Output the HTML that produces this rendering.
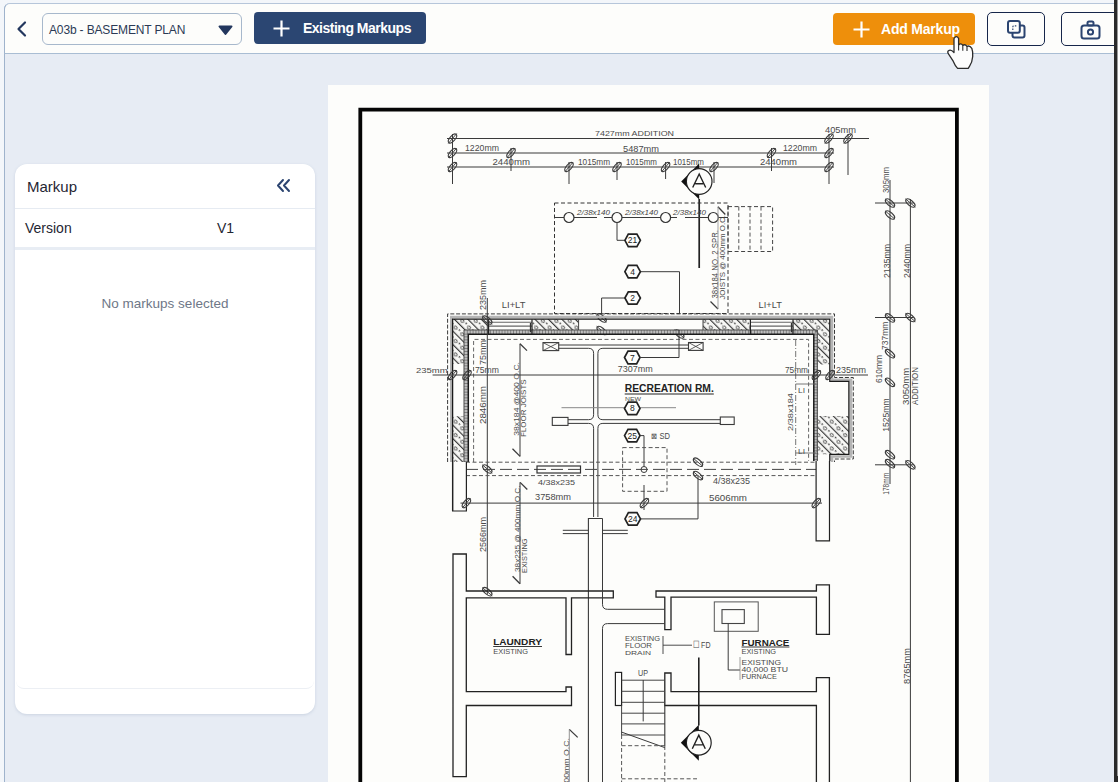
<!DOCTYPE html>
<html><head><meta charset="utf-8">
<style>
*{box-sizing:border-box;margin:0;padding:0}
html,body{width:1118px;height:782px;overflow:hidden;background:#f3f6fa;font-family:"Liberation Sans",sans-serif}
#app{position:absolute;left:4px;top:3px;width:1110px;height:779px;background:#e7ecf4;border-left:1px solid #9fb3cc;border-top:1px solid #b6c6da;border-top-left-radius:6px;overflow:hidden}
#hdr{position:absolute;left:0;top:0;width:1110px;height:51px;background:#fdfdfb;border-bottom:1px solid #a9bdd3}
#rbar{position:absolute;left:1114px;top:0;width:4px;height:782px;background:#2a2a2a}
.abs{position:absolute}
#sel{left:42px;top:13px;width:200px;height:32px;border:1px solid #a7b8cc;border-radius:6px;background:#fdfdfb}
#sel span{position:absolute;left:6px;top:9px;font-size:12px;color:#2b3a55;white-space:nowrap;letter-spacing:-0.15px}
#btnEx{left:254px;top:12px;width:172px;height:32px;background:#2b4672;border-radius:4px}
#btnAdd{left:833px;top:13px;width:142px;height:32px;background:#ee8f0b;border-radius:4px}
.btxt{position:absolute;font-weight:bold;font-size:14px;color:#fff;white-space:nowrap;letter-spacing:-0.2px}
.obtn{position:absolute;top:12px;height:34px;border:1.3px solid #16264a;border-radius:5px;background:#fdfdfb}
#panel{left:15px;top:164px;width:300px;height:550px;background:#fff;border-radius:12px;box-shadow:0 1px 3px rgba(120,140,170,.25)}
#paper{left:328px;top:85px;width:661px;height:697px;background:#fdfdfb}
</style></head>
<body>
<div id="app"></div>
<div id="hdr" class="abs" style="left:4px;top:3px;width:1110px;height:51px;border-left:1px solid #9fb3cc;border-top:1px solid #b6c6da;border-top-left-radius:6px"></div>
<!-- back chevron -->
<svg class="abs" style="left:0;top:0" width="60" height="60"><path d="M25 22.5 L18.5 29 L25 35.5" fill="none" stroke="#23375e" stroke-width="2.2" stroke-linecap="round" stroke-linejoin="round"/></svg>
<div id="sel" class="abs"><span>A03b - BASEMENT PLAN</span>
<svg class="abs" style="left:175px;top:11px" width="16" height="12"><path d="M1.5 1.5 L13.5 1.5 L7.5 9 Z" fill="#23375e" stroke="#23375e" stroke-width="2" stroke-linejoin="round"/></svg></div>
<div id="btnEx" class="abs">
<svg class="abs" style="left:19px;top:8px" width="17" height="17"><path d="M8.5 0.5V16.5M0.5 8.5H16.5" stroke="#fff" stroke-width="2.2"/></svg>
<span class="btxt" style="left:49px;top:8px;letter-spacing:-0.5px">Existing Markups</span></div>
<div id="btnAdd" class="abs">
<svg class="abs" style="left:20px;top:8px" width="17" height="17"><path d="M8.5 0.5V16.5M0.5 8.5H16.5" stroke="#fff" stroke-width="2.2"/></svg>
<span class="btxt" style="left:48px;top:8px">Add Markup</span></div>
<div class="obtn" style="left:987px;width:58px">
<svg class="abs" style="left:18px;top:6px" width="22" height="22"><rect x="6.5" y="6.5" width="12" height="12" rx="2" fill="none" stroke="#2b4470" stroke-width="2"/><rect x="2" y="2" width="11.8" height="11.8" rx="2" fill="#fdfdfb" stroke="#2b4470" stroke-width="2"/><path d="M6.8 11 V8.2 Q6.8 6.8 8.2 6.8 H10.5" fill="none" stroke="#2b4470" stroke-width="1.2" stroke-dasharray="1.5 1.2"/></svg></div>
<div class="obtn" style="left:1061px;width:70px">
<svg class="abs" style="left:15.5px;top:4.5px" width="24" height="22"><rect x="3.5" y="7.5" width="18" height="13" rx="2.5" fill="none" stroke="#2b4470" stroke-width="2"/><rect x="9.5" y="3.5" width="6" height="4" rx="1.5" fill="none" stroke="#2b4470" stroke-width="2"/><circle cx="12.5" cy="14" r="2.6" fill="none" stroke="#2b4470" stroke-width="2"/></svg></div>

<div id="panel" class="abs">
<div class="abs" style="left:12px;top:13.5px;font-size:15px;color:#1f2633">Markup</div>
<svg class="abs" style="left:258px;top:12px" width="22" height="20"><path d="M10 4 L5 9.5 L10 15 M16 4 L11 9.5 L16 15" fill="none" stroke="#2b4470" stroke-width="2" stroke-linecap="round" stroke-linejoin="round"/></svg>
<div class="abs" style="left:0;top:44px;width:300px;height:1px;background:#e6ebf2"></div>
<div class="abs" style="left:10px;top:56px;font-size:14px;color:#1f2633">Version</div>
<div class="abs" style="left:202px;top:56px;font-size:14px;color:#1f2633">V1</div>
<div class="abs" style="left:0;top:83px;width:300px;height:3px;background:#e8edf4"></div>
<div class="abs" style="left:1px;top:86px;width:298px;height:439px;border-bottom:1px solid #eceff4;border-radius:0 0 8px 8px"></div>
<div class="abs" style="left:0;top:131.5px;width:300px;text-align:center;font-size:13.5px;color:#6e7787">No markups selected</div>
</div>
<div id="paper" class="abs"></div>
<svg class="abs" style="left:0;top:0" width="1118" height="782" viewBox="0 0 1118 782" font-family="Liberation Sans, sans-serif"><defs><pattern id="hatch" patternUnits="userSpaceOnUse" width="9.5" height="9.5" patternTransform="rotate(-45)">
<rect width="9.5" height="9.5" fill="#f7f7f5"/><line x1="0.6" y1="0" x2="0.6" y2="9.5" stroke="#2a2a2a" stroke-width="1.1"/>
<ellipse cx="5" cy="2.8" rx="1.4" ry="1.9" fill="none" stroke="#444" stroke-width="0.9"/><circle cx="6" cy="7.3" r="0.8" fill="#333"/></pattern></defs>
<path d="M360.3 790 V109.7 H956.9 V790" fill="none" stroke="#050505" stroke-width="3.8"/>
<line x1="447" y1="138.5" x2="869" y2="138.5" stroke="#3a3a3a" stroke-width="1.1" stroke-linecap="butt"/>
<line x1="447" y1="153" x2="834" y2="153" stroke="#3a3a3a" stroke-width="1.1" stroke-linecap="butt"/>
<line x1="447" y1="167" x2="834" y2="167" stroke="#3a3a3a" stroke-width="1.1" stroke-linecap="butt"/>
<line x1="452.5" y1="134" x2="452.5" y2="184" stroke="#3a3a3a" stroke-width="1" stroke-linecap="butt"/>
<line x1="511" y1="148" x2="511" y2="171" stroke="#3a3a3a" stroke-width="1" stroke-linecap="butt"/>
<line x1="569" y1="162" x2="569" y2="184" stroke="#3a3a3a" stroke-width="1" stroke-linecap="butt"/>
<line x1="617" y1="162" x2="617" y2="180" stroke="#3a3a3a" stroke-width="1" stroke-linecap="butt"/>
<line x1="665.6" y1="162" x2="665.6" y2="179" stroke="#3a3a3a" stroke-width="1" stroke-linecap="butt"/>
<line x1="714" y1="162" x2="714" y2="183" stroke="#3a3a3a" stroke-width="1" stroke-linecap="butt"/>
<line x1="771.5" y1="148" x2="771.5" y2="171" stroke="#3a3a3a" stroke-width="1" stroke-linecap="butt"/>
<line x1="829" y1="134" x2="829" y2="184" stroke="#3a3a3a" stroke-width="1" stroke-linecap="butt"/>
<line x1="848" y1="134" x2="848" y2="175" stroke="#3a3a3a" stroke-width="1" stroke-linecap="butt"/>
<g transform="translate(452.5,138.5) rotate(40)"><ellipse cx="0" cy="0" rx="2.6" ry="5.6" fill="none" stroke="#3c3c3c" stroke-width="1.1"/><line x1="0" y1="-6.5" x2="0" y2="6.5" stroke="#444" stroke-width="0.9"/></g>
<g transform="translate(452.5,153) rotate(40)"><ellipse cx="0" cy="0" rx="2.6" ry="5.6" fill="none" stroke="#3c3c3c" stroke-width="1.1"/><line x1="0" y1="-6.5" x2="0" y2="6.5" stroke="#444" stroke-width="0.9"/></g>
<g transform="translate(452.5,167) rotate(40)"><ellipse cx="0" cy="0" rx="2.6" ry="5.6" fill="none" stroke="#3c3c3c" stroke-width="1.1"/><line x1="0" y1="-6.5" x2="0" y2="6.5" stroke="#444" stroke-width="0.9"/></g>
<g transform="translate(511,153) rotate(40)"><ellipse cx="0" cy="0" rx="2.6" ry="5.6" fill="none" stroke="#3c3c3c" stroke-width="1.1"/><line x1="0" y1="-6.5" x2="0" y2="6.5" stroke="#444" stroke-width="0.9"/></g>
<g transform="translate(569,167) rotate(40)"><ellipse cx="0" cy="0" rx="2.6" ry="5.6" fill="none" stroke="#3c3c3c" stroke-width="1.1"/><line x1="0" y1="-6.5" x2="0" y2="6.5" stroke="#444" stroke-width="0.9"/></g>
<g transform="translate(617,167) rotate(40)"><ellipse cx="0" cy="0" rx="2.6" ry="5.6" fill="none" stroke="#3c3c3c" stroke-width="1.1"/><line x1="0" y1="-6.5" x2="0" y2="6.5" stroke="#444" stroke-width="0.9"/></g>
<g transform="translate(665.6,167) rotate(40)"><ellipse cx="0" cy="0" rx="2.6" ry="5.6" fill="none" stroke="#3c3c3c" stroke-width="1.1"/><line x1="0" y1="-6.5" x2="0" y2="6.5" stroke="#444" stroke-width="0.9"/></g>
<g transform="translate(714,167) rotate(40)"><ellipse cx="0" cy="0" rx="2.6" ry="5.6" fill="none" stroke="#3c3c3c" stroke-width="1.1"/><line x1="0" y1="-6.5" x2="0" y2="6.5" stroke="#444" stroke-width="0.9"/></g>
<g transform="translate(771.5,153) rotate(40)"><ellipse cx="0" cy="0" rx="2.6" ry="5.6" fill="none" stroke="#3c3c3c" stroke-width="1.1"/><line x1="0" y1="-6.5" x2="0" y2="6.5" stroke="#444" stroke-width="0.9"/></g>
<g transform="translate(829,138.5) rotate(40)"><ellipse cx="0" cy="0" rx="2.6" ry="5.6" fill="none" stroke="#3c3c3c" stroke-width="1.1"/><line x1="0" y1="-6.5" x2="0" y2="6.5" stroke="#444" stroke-width="0.9"/></g>
<g transform="translate(829,153) rotate(40)"><ellipse cx="0" cy="0" rx="2.6" ry="5.6" fill="none" stroke="#3c3c3c" stroke-width="1.1"/><line x1="0" y1="-6.5" x2="0" y2="6.5" stroke="#444" stroke-width="0.9"/></g>
<g transform="translate(829,167) rotate(40)"><ellipse cx="0" cy="0" rx="2.6" ry="5.6" fill="none" stroke="#3c3c3c" stroke-width="1.1"/><line x1="0" y1="-6.5" x2="0" y2="6.5" stroke="#444" stroke-width="0.9"/></g>
<g transform="translate(848,138.5) rotate(40)"><ellipse cx="0" cy="0" rx="2.6" ry="5.6" fill="none" stroke="#3c3c3c" stroke-width="1.1"/><line x1="0" y1="-6.5" x2="0" y2="6.5" stroke="#444" stroke-width="0.9"/></g>
<text x="595" y="135.5" font-size="7.64" textLength="79" lengthAdjust="spacingAndGlyphs" fill="#4a4a4a" font-weight="normal">7427mm  ADDITION</text>
<text x="465" y="151.4" font-size="9.58" textLength="34" lengthAdjust="spacingAndGlyphs" fill="#4a4a4a" font-weight="normal">1220mm</text>
<text x="623" y="152" font-size="9.72" textLength="36" lengthAdjust="spacingAndGlyphs" fill="#4a4a4a" font-weight="normal">5487mm</text>
<text x="783" y="151" font-size="9.72" textLength="34" lengthAdjust="spacingAndGlyphs" fill="#4a4a4a" font-weight="normal">1220mm</text>
<text x="492.5" y="165.2" font-size="9.03" textLength="37.5" lengthAdjust="spacingAndGlyphs" fill="#4a4a4a" font-weight="normal">2440mm</text>
<text x="578" y="165.2" font-size="8.61" textLength="32" lengthAdjust="spacingAndGlyphs" fill="#4a4a4a" font-weight="normal">1015mm</text>
<text x="626" y="165.2" font-size="8.61" textLength="31" lengthAdjust="spacingAndGlyphs" fill="#4a4a4a" font-weight="normal">1015mm</text>
<text x="673" y="165.2" font-size="8.61" textLength="31" lengthAdjust="spacingAndGlyphs" fill="#4a4a4a" font-weight="normal">1015mm</text>
<text x="760" y="165.2" font-size="8.61" textLength="37" lengthAdjust="spacingAndGlyphs" fill="#4a4a4a" font-weight="normal">2440mm</text>
<text x="825" y="133" font-size="8.33" textLength="31" lengthAdjust="spacingAndGlyphs" fill="#4a4a4a" font-weight="normal">405mm</text>
<line x1="699.2" y1="199" x2="699.2" y2="268" stroke="#222" stroke-width="1.7" stroke-linecap="butt"/>
<path d="M699.2 163.5 L681.2 181.5 L699.2 199.5 Z" fill="#111"/>
<circle cx="699.2" cy="181.5" r="12.8" stroke="#222" stroke-width="1.2" fill="#fdfdfb"/>
<path d="M692.7 187.5 L699.2 174.0 L705.7 187.5 M695.2 183.7 H703.2" fill="none" stroke="#222" stroke-width="1.4"/>
<rect x="554.5" y="203" width="173.5" height="110.5" stroke="#333" stroke-width="1" fill="none" stroke-dasharray="4 2.5"/>
<line x1="554.5" y1="217.5" x2="597" y2="217.5" stroke="#3a3a3a" stroke-width="1.1" stroke-linecap="butt"/>
<line x1="604" y1="217.5" x2="677" y2="217.5" stroke="#3a3a3a" stroke-width="1.1" stroke-linecap="butt"/>
<line x1="685" y1="217.5" x2="728" y2="217.5" stroke="#3a3a3a" stroke-width="1.1" stroke-linecap="butt"/>
<circle cx="569" cy="217.5" r="5" stroke="#333" stroke-width="1.2" fill="#fdfdfb"/>
<circle cx="617" cy="217.5" r="5" stroke="#333" stroke-width="1.2" fill="#fdfdfb"/>
<circle cx="665.6" cy="217.5" r="5" stroke="#333" stroke-width="1.2" fill="#fdfdfb"/>
<circle cx="713.3" cy="217.5" r="5" stroke="#333" stroke-width="1.2" fill="#fdfdfb"/>
<text x="577" y="214.5" font-size="8" font-style="italic" textLength="33" lengthAdjust="spacingAndGlyphs" fill="#444">2/38x140</text>
<text x="625" y="214.5" font-size="8" font-style="italic" textLength="33" lengthAdjust="spacingAndGlyphs" fill="#444">2/38x140</text>
<text x="673" y="214.5" font-size="8" font-style="italic" textLength="33" lengthAdjust="spacingAndGlyphs" fill="#444">2/38x140</text>
<path d="M617 222.5 V240.3 H625" stroke="#3a3a3a" stroke-width="1" fill="none" />
<path d="M624.9 240.3 L628.3 234.1 L636.9 234.1 L640.4 240.3 L636.9 246.6 L628.3 246.6 Z" stroke="#222" stroke-width="1.7" fill="#fdfdfb" />
<text x="632.6" y="243.3" font-size="8.5" text-anchor="middle" fill="#222">21</text>
<path d="M640.4 271.7 H679.5 V313" stroke="#3a3a3a" stroke-width="1" fill="none" />
<path d="M624.9 271.7 L628.3 265.4 L636.9 265.4 L640.4 271.7 L636.9 277.9 L628.3 277.9 Z" stroke="#222" stroke-width="1.7" fill="#fdfdfb" />
<text x="632.6" y="274.7" font-size="8.5" text-anchor="middle" fill="#222">4</text>
<path d="M624.8 298 H601.6 V313" stroke="#3a3a3a" stroke-width="1" fill="none" />
<path d="M624.9 298.0 L628.3 291.8 L636.9 291.8 L640.4 298.0 L636.9 304.2 L628.3 304.2 Z" stroke="#222" stroke-width="1.7" fill="#fdfdfb" />
<text x="632.6" y="301" font-size="8.5" text-anchor="middle" fill="#222">2</text>
<g transform="translate(601.6,318) rotate(-50)"><ellipse cx="0" cy="0" rx="2.6" ry="5.6" fill="none" stroke="#3c3c3c" stroke-width="1.1"/><line x1="0" y1="-6.5" x2="0" y2="6.5" stroke="#444" stroke-width="0.9"/></g>
<g transform="translate(601.6,330.5) rotate(-50)"><ellipse cx="0" cy="0" rx="2.6" ry="5.6" fill="none" stroke="#3c3c3c" stroke-width="1.1"/><line x1="0" y1="-6.5" x2="0" y2="6.5" stroke="#444" stroke-width="0.9"/></g>
<g transform="translate(679.3,334) rotate(-50)"><ellipse cx="0" cy="0" rx="2.6" ry="5.6" fill="none" stroke="#3c3c3c" stroke-width="1.1"/><line x1="0" y1="-6.5" x2="0" y2="6.5" stroke="#444" stroke-width="0.9"/></g>
<rect x="728" y="206.6" width="44.60000000000002" height="44.900000000000006" stroke="#444" stroke-width="1" fill="none" stroke-dasharray="4 2.5"/>
<line x1="738.8" y1="206.6" x2="738.8" y2="251.5" stroke="#555" stroke-width="1" stroke-linecap="butt" stroke-dasharray="4 2.5"/>
<line x1="750" y1="206.6" x2="750" y2="251.5" stroke="#555" stroke-width="1" stroke-linecap="butt" stroke-dasharray="4 2.5"/>
<line x1="761" y1="206.6" x2="761" y2="251.5" stroke="#555" stroke-width="1" stroke-linecap="butt" stroke-dasharray="4 2.5"/>
<text transform="translate(717.5,298.5) rotate(-90)" x="0" y="0" font-size="8.33" textLength="68.5" lengthAdjust="spacingAndGlyphs" fill="#4a4a4a" font-weight="normal">38x184 NO. 2 SPR.</text>
<text transform="translate(725,299.6) rotate(-90)" x="0" y="0" font-size="7.69" textLength="84.60000000000002" lengthAdjust="spacingAndGlyphs" fill="#4a4a4a" font-weight="normal">JOISTS @ 400mm O.C.</text>
<line x1="717.9" y1="206.7" x2="725.3" y2="214.5" stroke="#3a3a3a" stroke-width="1.3" stroke-linecap="butt"/>
<line x1="710.5" y1="301.5" x2="718" y2="309" stroke="#3a3a3a" stroke-width="1.3" stroke-linecap="butt"/>
<line x1="718" y1="206.7" x2="718" y2="309" stroke="#999" stroke-width="0.9" stroke-linecap="butt"/>
<text x="501.8" y="308" font-size="8.33" textLength="23.599999999999966" lengthAdjust="spacingAndGlyphs" fill="#4a4a4a" font-weight="normal">LI+LT</text>
<text x="758.6" y="308.3" font-size="8.19" textLength="23.299999999999955" lengthAdjust="spacingAndGlyphs" fill="#4a4a4a" font-weight="normal">LI+LT</text>
<text transform="translate(485.5,310) rotate(-90)" x="0" y="0" font-size="9.62" textLength="30" lengthAdjust="spacingAndGlyphs" fill="#4a4a4a" font-weight="normal">235mm</text>
<rect x="452.6" y="319.2" width="35.599999999999966" height="10.800000000000011" fill="url(#hatch)"/>
<rect x="532" y="319.2" width="46.60000000000002" height="10.800000000000011" fill="url(#hatch)"/>
<rect x="703" y="319.2" width="47.39999999999998" height="10.800000000000011" fill="url(#hatch)"/>
<rect x="793" y="319.2" width="37" height="10.800000000000011" fill="url(#hatch)"/>
<rect x="452.6" y="319.2" width="11.399999999999977" height="44.80000000000001" fill="url(#hatch)"/>
<rect x="452.6" y="416.3" width="11.399999999999977" height="45.69999999999999" fill="url(#hatch)"/>
<rect x="817.3" y="319.2" width="12.5" height="45.30000000000001" fill="url(#hatch)"/>
<rect x="817.3" y="416" width="31.600000000000023" height="38.30000000000001" fill="url(#hatch)"/>
<path d="M451.3 462 V317 H832 V379.8 H851 V456.5 H832 V462" fill="none" stroke="#b5b5b5" stroke-width="2.6"/>
<path d="M447.6 462 V313.9 H834.5 V377.5 H853.3 V459 H834.5 V462" stroke="#3a3a3a" stroke-width="1" fill="none" stroke-dasharray="4 1.8" />
<path d="M452.6 511 V319.2 H829.8 V381.4 H848.9 V454.3 H829.8 V461" stroke="#1a1a1a" stroke-width="1.3" fill="none" />
<path d="M466.2 462 V332.2 H815.5 V461" fill="none" stroke="#bdbdbd" stroke-width="4"/>
<path d="M466.2 462 V332.2 H815.5 V461" fill="none" stroke="#6a6a6a" stroke-width="4" stroke-dasharray="0.7 2.2"/>
<path d="M464 462 V330 H817.3 V461" stroke="#333" stroke-width="0.9" fill="none" />
<path d="M468.3 462 V334.3 H813.8 V461" stroke="#1a1a1a" stroke-width="1.5" fill="none" />
<line x1="488.2" y1="322.3" x2="532" y2="322.3" stroke="#666" stroke-width="1.1" stroke-linecap="butt"/>
<line x1="750.4" y1="322.3" x2="793" y2="322.3" stroke="#666" stroke-width="1.1" stroke-linecap="butt"/>
<line x1="488.2" y1="326.1" x2="532" y2="326.1" stroke="#666" stroke-width="1.1" stroke-linecap="butt"/>
<line x1="750.4" y1="326.1" x2="793" y2="326.1" stroke="#666" stroke-width="1.1" stroke-linecap="butt"/>
<line x1="488.6" y1="319.2" x2="488.6" y2="334.3" stroke="#222" stroke-width="1.2" stroke-linecap="butt"/>
<line x1="532" y1="319.2" x2="532" y2="334.3" stroke="#222" stroke-width="1.2" stroke-linecap="butt"/>
<line x1="530.5" y1="323" x2="530.5" y2="332" stroke="#333" stroke-width="1.3" stroke-linecap="butt"/>
<line x1="750.4" y1="319.2" x2="750.4" y2="334.3" stroke="#222" stroke-width="1.2" stroke-linecap="butt"/>
<line x1="793" y1="319.2" x2="793" y2="334.3" stroke="#222" stroke-width="1.2" stroke-linecap="butt"/>
<line x1="791.5" y1="323" x2="791.5" y2="332" stroke="#333" stroke-width="1.3" stroke-linecap="butt"/>
<line x1="578.6" y1="319.2" x2="578.6" y2="330" stroke="#444" stroke-width="1" stroke-linecap="butt"/>
<line x1="703" y1="319.2" x2="703" y2="330" stroke="#444" stroke-width="1" stroke-linecap="butt"/>
<path d="M473.6 462 V339.4 H808.6 V461" stroke="#666" stroke-width="1" fill="none" stroke-dasharray="4 2.5" />
<line x1="795.7" y1="340" x2="795.7" y2="465" stroke="#666" stroke-width="0.9" stroke-linecap="butt" stroke-dasharray="6 2 1 2"/>
<line x1="795.7" y1="384" x2="816" y2="384" stroke="#666" stroke-width="0.9" stroke-linecap="butt"/>
<line x1="795.7" y1="453" x2="816" y2="453" stroke="#666" stroke-width="0.9" stroke-linecap="butt"/>
<text x="798" y="392.5" font-size="6.94" textLength="7" lengthAdjust="spacingAndGlyphs" fill="#4a4a4a" font-weight="normal">LI</text>
<text x="798" y="454" font-size="6.94" textLength="7" lengthAdjust="spacingAndGlyphs" fill="#4a4a4a" font-weight="normal">LI</text>
<text transform="translate(792.8,431) rotate(-90)" x="0" y="0" font-size="8.08" textLength="38" lengthAdjust="spacingAndGlyphs" fill="#4a4a4a" font-weight="normal">2/38x184</text>
<line x1="487.3" y1="298" x2="487.3" y2="594.6" stroke="#3a3a3a" stroke-width="1" stroke-linecap="butt"/>
<line x1="432.6" y1="375" x2="868" y2="375" stroke="#3a3a3a" stroke-width="1" stroke-linecap="butt"/>
<g transform="translate(452.6,375) rotate(40)"><ellipse cx="0" cy="0" rx="2.6" ry="5.6" fill="none" stroke="#3c3c3c" stroke-width="1.1"/><line x1="0" y1="-6.5" x2="0" y2="6.5" stroke="#444" stroke-width="0.9"/></g>
<g transform="translate(467,375) rotate(40)"><ellipse cx="0" cy="0" rx="2.6" ry="5.6" fill="none" stroke="#3c3c3c" stroke-width="1.1"/><line x1="0" y1="-6.5" x2="0" y2="6.5" stroke="#444" stroke-width="0.9"/></g>
<g transform="translate(816.4,375) rotate(40)"><ellipse cx="0" cy="0" rx="2.6" ry="5.6" fill="none" stroke="#3c3c3c" stroke-width="1.1"/><line x1="0" y1="-6.5" x2="0" y2="6.5" stroke="#444" stroke-width="0.9"/></g>
<g transform="translate(830,375) rotate(40)"><ellipse cx="0" cy="0" rx="2.6" ry="5.6" fill="none" stroke="#3c3c3c" stroke-width="1.1"/><line x1="0" y1="-6.5" x2="0" y2="6.5" stroke="#444" stroke-width="0.9"/></g>
<g transform="translate(487.3,320) rotate(-50)"><ellipse cx="0" cy="0" rx="2.6" ry="5.6" fill="none" stroke="#3c3c3c" stroke-width="1.1"/><line x1="0" y1="-6.5" x2="0" y2="6.5" stroke="#444" stroke-width="0.9"/></g>
<g transform="translate(487.3,469) rotate(-50)"><ellipse cx="0" cy="0" rx="2.6" ry="5.6" fill="none" stroke="#3c3c3c" stroke-width="1.1"/><line x1="0" y1="-6.5" x2="0" y2="6.5" stroke="#444" stroke-width="0.9"/></g>
<g transform="translate(487.3,591.7) rotate(-50)"><ellipse cx="0" cy="0" rx="2.6" ry="5.6" fill="none" stroke="#3c3c3c" stroke-width="1.1"/><line x1="0" y1="-6.5" x2="0" y2="6.5" stroke="#444" stroke-width="0.9"/></g>
<text x="416" y="372.5" font-size="8.06" textLength="31.600000000000023" lengthAdjust="spacingAndGlyphs" fill="#4a4a4a" font-weight="normal">235mm</text>
<text x="475" y="373" font-size="8.33" textLength="24" lengthAdjust="spacingAndGlyphs" fill="#4a4a4a" font-weight="normal">75mm</text>
<text x="785" y="373" font-size="8.33" textLength="23" lengthAdjust="spacingAndGlyphs" fill="#4a4a4a" font-weight="normal">75mm</text>
<text x="836" y="373" font-size="8.33" textLength="30" lengthAdjust="spacingAndGlyphs" fill="#4a4a4a" font-weight="normal">235mm</text>
<text transform="translate(485.5,365) rotate(-90)" x="0" y="0" font-size="9.62" textLength="25" lengthAdjust="spacingAndGlyphs" fill="#4a4a4a" font-weight="normal">75mm</text>
<text transform="translate(485.5,424) rotate(-90)" x="0" y="0" font-size="9.62" textLength="38" lengthAdjust="spacingAndGlyphs" fill="#4a4a4a" font-weight="normal">2846mm</text>
<text transform="translate(519,435.8) rotate(-90)" x="0" y="0" font-size="7.44" textLength="73.80000000000001" lengthAdjust="spacingAndGlyphs" fill="#4a4a4a" font-weight="normal">38x184 @400 O.C.</text>
<text transform="translate(526.3,437) rotate(-90)" x="0" y="0" font-size="7.44" textLength="57.60000000000002" lengthAdjust="spacingAndGlyphs" fill="#4a4a4a" font-weight="normal">FLOOR JOISTS</text>
<line x1="520" y1="343.7" x2="527" y2="350.6" stroke="#3a3a3a" stroke-width="1.3" stroke-linecap="butt"/>
<line x1="512.5" y1="448.8" x2="520.1" y2="456.4" stroke="#3a3a3a" stroke-width="1.3" stroke-linecap="butt"/>
<line x1="520" y1="343.7" x2="520" y2="456.4" stroke="#3a3a3a" stroke-width="1" stroke-linecap="butt"/>
<rect x="543" y="342.6" width="15.700000000000045" height="8.0" stroke="#3a3a3a" stroke-width="1.1" fill="none"/>
<line x1="543" y1="342.6" x2="558.7" y2="350.6" stroke="#3a3a3a" stroke-width="0.8" stroke-linecap="butt"/>
<line x1="543" y1="350.6" x2="558.7" y2="342.6" stroke="#3a3a3a" stroke-width="0.8" stroke-linecap="butt"/>
<rect x="688.5" y="342.5" width="14.600000000000023" height="7.899999999999977" stroke="#3a3a3a" stroke-width="1.1" fill="none"/>
<line x1="688.5" y1="342.5" x2="703.1" y2="350.4" stroke="#3a3a3a" stroke-width="0.8" stroke-linecap="butt"/>
<line x1="688.5" y1="350.4" x2="703.1" y2="342.5" stroke="#3a3a3a" stroke-width="0.8" stroke-linecap="butt"/>
<line x1="558.7" y1="345" x2="688.5" y2="345" stroke="#3a3a3a" stroke-width="1" stroke-linecap="butt"/>
<path d="M558.7 348.3 H588.6 Q593.6 348.3 593.6 353.3 V414.7 Q593.6 419.7 588.6 419.7 H568" stroke="#3a3a3a" stroke-width="1" fill="none" />
<path d="M688.5 348.3 H602.9 Q597.9 348.3 597.9 353.3 V414.7 Q597.9 419.7 602.9 419.7 H720.3" stroke="#3a3a3a" stroke-width="1" fill="none" />
<path d="M568 423.4 H588.6 Q593.6 423.4 593.6 428.4 V517" stroke="#3a3a3a" stroke-width="1" fill="none" />
<path d="M720.3 423.4 H602.9 Q597.9 423.4 597.9 428.4 V517" stroke="#3a3a3a" stroke-width="1" fill="none" />
<rect x="552.3" y="417.4" width="15.700000000000045" height="8.0" stroke="#3a3a3a" stroke-width="1.1" fill="none"/>
<rect x="720.3" y="417" width="13.900000000000091" height="7.5" stroke="#3a3a3a" stroke-width="1.1" fill="none"/>
<line x1="561.5" y1="407.7" x2="676" y2="407.7" stroke="#888" stroke-width="1" stroke-linecap="butt"/>
<path d="M624.5 357.5 L628.0 351.2 L636.6 351.2 L640.0 357.5 L636.6 363.8 L628.0 363.8 Z" stroke="#222" stroke-width="1.7" fill="#fdfdfb" />
<text x="632.3" y="360.5" font-size="8.5" text-anchor="middle" fill="#222">7</text>
<path d="M640 357.5 H679 V330" stroke="#3a3a3a" stroke-width="1" fill="none" />
<text x="617.7" y="372" font-size="8.33" textLength="35.0" lengthAdjust="spacingAndGlyphs" fill="#4a4a4a" font-weight="normal">7307mm</text>
<text x="624.7" y="392.3" font-size="10.56" textLength="89.09999999999991" lengthAdjust="spacingAndGlyphs" fill="#222" font-weight="bold">RECREATION RM.</text>
<line x1="624.7" y1="394" x2="713.8" y2="394" stroke="#222" stroke-width="1.2" stroke-linecap="butt"/>
<text x="625" y="401" font-size="6.25" textLength="16" lengthAdjust="spacingAndGlyphs" fill="#4a4a4a" font-weight="normal">NEW</text>
<path d="M624.5 408.4 L628.0 402.1 L636.6 402.1 L640.0 408.4 L636.6 414.6 L628.0 414.6 Z" stroke="#222" stroke-width="1.7" fill="#fdfdfb" />
<text x="632.3" y="411.4" font-size="8.5" text-anchor="middle" fill="#222">8</text>
<path d="M624.5 435.6 L628.0 429.4 L636.6 429.4 L640.0 435.6 L636.6 441.9 L628.0 441.9 Z" stroke="#222" stroke-width="1.7" fill="#fdfdfb" />
<text x="632.3" y="438.6" font-size="8.5" text-anchor="middle" fill="#222">25</text>
<path d="M640 435.6 H644 V466.5" stroke="#3a3a3a" stroke-width="1" fill="none" />
<circle cx="644" cy="469.5" r="3" stroke="#3a3a3a" stroke-width="1" fill="none"/>
<text x="651" y="438.5" font-size="8.33" textLength="19" lengthAdjust="spacingAndGlyphs" fill="#4a4a4a" font-weight="normal">⊠ SD</text>
<rect x="622.6" y="447.6" width="44.39999999999998" height="43.69999999999999" stroke="#555" stroke-width="1" fill="none" stroke-dasharray="4 2.5"/>
<line x1="644" y1="485" x2="644" y2="510" stroke="#3a3a3a" stroke-width="1" stroke-linecap="butt"/>
<line x1="466" y1="462.2" x2="816" y2="462.2" stroke="#555" stroke-width="1" stroke-linecap="butt" stroke-dasharray="4 2.5"/>
<line x1="466" y1="469.4" x2="816" y2="469.4" stroke="#444" stroke-width="1" stroke-linecap="butt" stroke-dasharray="12 5"/>
<line x1="466" y1="475.6" x2="816" y2="475.6" stroke="#555" stroke-width="1" stroke-linecap="butt" stroke-dasharray="4 2.5"/>
<path d="M452.6 462 V511 H466.4 V462" stroke="#222" stroke-width="1.2" fill="none" />
<path d="M816.1 461 V540.9 H829.5 V461" stroke="#222" stroke-width="1.2" fill="none" />
<rect x="537" y="466" width="43.5" height="7" stroke="#333" stroke-width="1.2" fill="none"/>
<text x="538" y="484.5" font-size="7.64" textLength="37" lengthAdjust="spacingAndGlyphs" fill="#4a4a4a" font-weight="normal">4/38x235</text>
<text x="713" y="484" font-size="8.33" textLength="37" lengthAdjust="spacingAndGlyphs" fill="#4a4a4a" font-weight="normal">4/38x235</text>
<line x1="460.5" y1="503.1" x2="822" y2="503.1" stroke="#3a3a3a" stroke-width="1" stroke-linecap="butt"/>
<g transform="translate(466.4,503.1) rotate(40)"><ellipse cx="0" cy="0" rx="2.6" ry="5.6" fill="none" stroke="#3c3c3c" stroke-width="1.1"/><line x1="0" y1="-6.5" x2="0" y2="6.5" stroke="#444" stroke-width="0.9"/></g>
<g transform="translate(644.4,503.1) rotate(40)"><ellipse cx="0" cy="0" rx="2.6" ry="5.6" fill="none" stroke="#3c3c3c" stroke-width="1.1"/><line x1="0" y1="-6.5" x2="0" y2="6.5" stroke="#444" stroke-width="0.9"/></g>
<g transform="translate(816.3,503.1) rotate(40)"><ellipse cx="0" cy="0" rx="2.6" ry="5.6" fill="none" stroke="#3c3c3c" stroke-width="1.1"/><line x1="0" y1="-6.5" x2="0" y2="6.5" stroke="#444" stroke-width="0.9"/></g>
<g transform="translate(698,462.2) rotate(-50)"><ellipse cx="0" cy="0" rx="2.6" ry="5.6" fill="none" stroke="#3c3c3c" stroke-width="1.1"/><line x1="0" y1="-6.5" x2="0" y2="6.5" stroke="#444" stroke-width="0.9"/></g>
<g transform="translate(698,475.6) rotate(-50)"><ellipse cx="0" cy="0" rx="2.6" ry="5.6" fill="none" stroke="#3c3c3c" stroke-width="1.1"/><line x1="0" y1="-6.5" x2="0" y2="6.5" stroke="#444" stroke-width="0.9"/></g>
<text x="535" y="500" font-size="9.72" textLength="36" lengthAdjust="spacingAndGlyphs" fill="#4a4a4a" font-weight="normal">3758mm</text>
<text x="709" y="501" font-size="9.72" textLength="38" lengthAdjust="spacingAndGlyphs" fill="#4a4a4a" font-weight="normal">5606mm</text>
<path d="M698 475.6 V518.9 H640.5" stroke="#3a3a3a" stroke-width="1" fill="none" />
<path d="M625.0 518.9 L628.4 512.6 L637.0 512.6 L640.5 518.9 L637.0 525.1 L628.4 525.1 Z" stroke="#222" stroke-width="1.7" fill="#fdfdfb" />
<text x="632.7" y="521.9" font-size="8.5" text-anchor="middle" fill="#222">24</text>
<text transform="translate(485.5,552) rotate(-90)" x="0" y="0" font-size="8.33" textLength="35" lengthAdjust="spacingAndGlyphs" fill="#4a4a4a" font-weight="normal">2566mm</text>
<text transform="translate(519.5,572) rotate(-90)" x="0" y="0" font-size="7.56" textLength="86.60000000000002" lengthAdjust="spacingAndGlyphs" fill="#4a4a4a" font-weight="normal">38x235 @ 400mm O.C.</text>
<text transform="translate(527.4,573) rotate(-90)" x="0" y="0" font-size="7.56" textLength="34.5" lengthAdjust="spacingAndGlyphs" fill="#4a4a4a" font-weight="normal">EXISTING</text>
<line x1="520.1" y1="482.4" x2="527.3" y2="489.5" stroke="#3a3a3a" stroke-width="1.3" stroke-linecap="butt"/>
<line x1="512.6" y1="576.3" x2="520" y2="583.8" stroke="#3a3a3a" stroke-width="1.3" stroke-linecap="butt"/>
<line x1="520" y1="482.4" x2="520" y2="583.8" stroke="#3a3a3a" stroke-width="1" stroke-linecap="butt"/>
<path d="M588.4 782 V518.5 H602.5" stroke="#3a3a3a" stroke-width="1.1" fill="none" />
<line x1="562.8" y1="530.3" x2="588.4" y2="530.3" stroke="#3a3a3a" stroke-width="1" stroke-linecap="butt"/>
<line x1="562.8" y1="533.6" x2="588.4" y2="533.6" stroke="#3a3a3a" stroke-width="1" stroke-linecap="butt"/>
<line x1="602.8" y1="530.3" x2="627.8" y2="530.3" stroke="#3a3a3a" stroke-width="1" stroke-linecap="butt"/>
<line x1="602.8" y1="533.6" x2="627.8" y2="533.6" stroke="#3a3a3a" stroke-width="1" stroke-linecap="butt"/>
<path d="M453 776.7 V554 H466.3 V591 H613.3 V597.9 H571.5 V654.5 H566 V597.9 H466.3 V691.6 H566 V687 H571.5 V705.5 H466.3 V776.7 Z" stroke="#222" stroke-width="1.3" fill="none" />
<path d="M656 591 H816.4 V584.9 H829.4 V634.4 H816.4 V597.2 H671 V629.7 H664.8 V597.2 H656 Z" stroke="#222" stroke-width="1.3" fill="none" />
<path d="M829.4 782 V677.7 H816.4 V691.6 H671 V673 H664.8 V705.5 H816.4 V782" stroke="#222" stroke-width="1.3" fill="none" />
<rect x="714.3" y="601.9" width="43.90000000000009" height="29.399999999999977" stroke="#555" stroke-width="1" fill="none"/>
<rect x="722" y="609.6" width="22.299999999999955" height="13.899999999999977" stroke="#444" stroke-width="1.1" fill="none"/>
<path d="M728.2 623.5 V670 H740" stroke="#3a3a3a" stroke-width="1" fill="none" />
<text x="741.5" y="645.8" font-size="9.44" textLength="47.89999999999998" lengthAdjust="spacingAndGlyphs" fill="#222" font-weight="bold">FURNACE</text>
<line x1="741.5" y1="647" x2="789.4" y2="647" stroke="#3a3a3a" stroke-width="1.1" stroke-linecap="butt"/>
<text x="741.5" y="654.4" font-size="7.50" textLength="34.5" lengthAdjust="spacingAndGlyphs" fill="#4a4a4a" font-weight="normal">EXISTING</text>
<text x="741.5" y="665.4" font-size="6.67" textLength="39.5" lengthAdjust="spacingAndGlyphs" fill="#4a4a4a" font-weight="normal">EXISTING</text>
<text x="741.5" y="672" font-size="6.94" textLength="46.5" lengthAdjust="spacingAndGlyphs" fill="#4a4a4a" font-weight="normal">40,000 BTU</text>
<text x="741.5" y="679" font-size="6.94" textLength="35.5" lengthAdjust="spacingAndGlyphs" fill="#4a4a4a" font-weight="normal">FURNACE</text>
<line x1="740" y1="657" x2="740" y2="680" stroke="#888" stroke-width="0.8" stroke-linecap="butt"/>
<text x="493.2" y="645.2" font-size="9.44" textLength="48.80000000000001" lengthAdjust="spacingAndGlyphs" fill="#222" font-weight="bold">LAUNDRY</text>
<line x1="493.2" y1="646.5" x2="542" y2="646.5" stroke="#3a3a3a" stroke-width="1.1" stroke-linecap="butt"/>
<text x="493.2" y="654.3" font-size="7.64" textLength="34.80000000000001" lengthAdjust="spacingAndGlyphs" fill="#4a4a4a" font-weight="normal">EXISTING</text>
<text x="625" y="641" font-size="6.94" textLength="35" lengthAdjust="spacingAndGlyphs" fill="#4a4a4a" font-weight="normal">EXISTING</text>
<text x="625" y="648" font-size="6.94" textLength="27" lengthAdjust="spacingAndGlyphs" fill="#4a4a4a" font-weight="normal">FLOOR</text>
<text x="625" y="654.5" font-size="6.25" textLength="26" lengthAdjust="spacingAndGlyphs" fill="#4a4a4a" font-weight="normal">DRAIN</text>
<line x1="663" y1="645.2" x2="692" y2="645.2" stroke="#3a3a3a" stroke-width="0.9" stroke-linecap="butt"/>
<line x1="663" y1="636" x2="663" y2="654" stroke="#3a3a3a" stroke-width="0.9" stroke-linecap="butt"/>
<text x="692.6" y="648" font-size="9.72" textLength="17.899999999999977" lengthAdjust="spacingAndGlyphs" fill="#4a4a4a" font-weight="normal">☐ FD</text>
<path d="M602.5 518.5 V604.3 Q602.5 609.3 607.5 609.3 H664.8" stroke="#3a3a3a" stroke-width="1" fill="none" />
<path d="M664.8 623.6 H607.5 Q602.5 623.6 602.5 628.6 V782" stroke="#3a3a3a" stroke-width="1" fill="none" />
<line x1="698.8" y1="657.6" x2="698.8" y2="725.6" stroke="#222" stroke-width="1.6" stroke-linecap="butt"/>
<path d="M698.8 724.7 L680.8 742.7 L698.8 760.7 Z" fill="#111"/>
<circle cx="698.8" cy="742.7" r="12.4" stroke="#222" stroke-width="1.2" fill="#fdfdfb"/>
<path d="M692.3 748.7 L698.8 735.2 L705.3 748.7 M694.8 744.9000000000001 H702.8" fill="none" stroke="#222" stroke-width="1.4"/>
<rect x="615.4" y="672.4" width="6.2000000000000455" height="33.10000000000002" stroke="#222" stroke-width="1.2" fill="none"/>
<line x1="621.6" y1="705.5" x2="621.6" y2="735" stroke="#444" stroke-width="1" stroke-linecap="butt"/>
<line x1="621.6" y1="680.2" x2="664.8" y2="680.2" stroke="#444" stroke-width="1" stroke-linecap="butt"/>
<line x1="621.6" y1="691.3" x2="664.8" y2="691.3" stroke="#444" stroke-width="1" stroke-linecap="butt"/>
<line x1="621.6" y1="702.3" x2="664.8" y2="702.3" stroke="#444" stroke-width="1" stroke-linecap="butt"/>
<line x1="621.6" y1="713.2" x2="664.8" y2="713.2" stroke="#444" stroke-width="1" stroke-linecap="butt"/>
<line x1="621.6" y1="723.9" x2="664.8" y2="723.9" stroke="#444" stroke-width="1" stroke-linecap="butt"/>
<line x1="621.6" y1="735" x2="664.8" y2="735" stroke="#444" stroke-width="1" stroke-linecap="butt"/>
<line x1="643.2" y1="680" x2="643.2" y2="721.4" stroke="#3a3a3a" stroke-width="1" stroke-linecap="butt"/>
<text x="638" y="676" font-size="8.33" textLength="10" lengthAdjust="spacingAndGlyphs" fill="#4a4a4a" font-weight="normal">UP</text>
<path d="M621.6 732.1 L665 747.7" stroke="#3a3a3a" stroke-width="1" fill="none" />
<line x1="621.6" y1="735" x2="621.6" y2="782" stroke="#555" stroke-width="1" stroke-linecap="butt" stroke-dasharray="4 2.5"/>
<line x1="621.6" y1="745.7" x2="665" y2="745.7" stroke="#555" stroke-width="1" stroke-linecap="butt" stroke-dasharray="4 2.5"/>
<line x1="621.6" y1="778.8" x2="697" y2="778.8" stroke="#555" stroke-width="1" stroke-linecap="butt" stroke-dasharray="4 2.5"/>
<line x1="664.8" y1="705.5" x2="664.8" y2="746" stroke="#333" stroke-width="1.1" stroke-linecap="butt"/>
<line x1="664.8" y1="746" x2="664.8" y2="782" stroke="#555" stroke-width="1" stroke-linecap="butt" stroke-dasharray="4 2.5"/>
<text transform="translate(569,830) rotate(-90)" x="0" y="0" font-size="7.05" textLength="92" lengthAdjust="spacingAndGlyphs" fill="#4a4a4a" font-weight="normal">38x235 @ 400mm O.C.</text>
<line x1="569.3" y1="729.4" x2="577.7" y2="737.4" stroke="#3a3a3a" stroke-width="1.3" stroke-linecap="butt"/>
<line x1="569.3" y1="729.4" x2="569.3" y2="782" stroke="#888" stroke-width="0.9" stroke-linecap="butt"/>
<line x1="890" y1="180" x2="890" y2="484" stroke="#3a3a3a" stroke-width="1" stroke-linecap="butt"/>
<line x1="910.4" y1="199" x2="910.4" y2="782" stroke="#3a3a3a" stroke-width="1" stroke-linecap="butt"/>
<line x1="875" y1="203" x2="913.6" y2="203" stroke="#3a3a3a" stroke-width="1" stroke-linecap="butt"/>
<line x1="875" y1="317.5" x2="913.6" y2="317.5" stroke="#3a3a3a" stroke-width="1" stroke-linecap="butt"/>
<line x1="875" y1="464.8" x2="913.6" y2="464.8" stroke="#3a3a3a" stroke-width="1" stroke-linecap="butt"/>
<g transform="translate(890,203) rotate(-50)"><ellipse cx="0" cy="0" rx="2.6" ry="5.6" fill="none" stroke="#3c3c3c" stroke-width="1.1"/><line x1="0" y1="-6.5" x2="0" y2="6.5" stroke="#444" stroke-width="0.9"/></g>
<g transform="translate(890,215) rotate(-50)"><ellipse cx="0" cy="0" rx="2.6" ry="5.6" fill="none" stroke="#3c3c3c" stroke-width="1.1"/><line x1="0" y1="-6.5" x2="0" y2="6.5" stroke="#444" stroke-width="0.9"/></g>
<g transform="translate(890,317.9) rotate(-50)"><ellipse cx="0" cy="0" rx="2.6" ry="5.6" fill="none" stroke="#3c3c3c" stroke-width="1.1"/><line x1="0" y1="-6.5" x2="0" y2="6.5" stroke="#444" stroke-width="0.9"/></g>
<g transform="translate(890,353.7) rotate(-50)"><ellipse cx="0" cy="0" rx="2.6" ry="5.6" fill="none" stroke="#3c3c3c" stroke-width="1.1"/><line x1="0" y1="-6.5" x2="0" y2="6.5" stroke="#444" stroke-width="0.9"/></g>
<g transform="translate(890,382.3) rotate(-50)"><ellipse cx="0" cy="0" rx="2.6" ry="5.6" fill="none" stroke="#3c3c3c" stroke-width="1.1"/><line x1="0" y1="-6.5" x2="0" y2="6.5" stroke="#444" stroke-width="0.9"/></g>
<g transform="translate(890,454.7) rotate(-50)"><ellipse cx="0" cy="0" rx="2.6" ry="5.6" fill="none" stroke="#3c3c3c" stroke-width="1.1"/><line x1="0" y1="-6.5" x2="0" y2="6.5" stroke="#444" stroke-width="0.9"/></g>
<g transform="translate(890,463.7) rotate(-50)"><ellipse cx="0" cy="0" rx="2.6" ry="5.6" fill="none" stroke="#3c3c3c" stroke-width="1.1"/><line x1="0" y1="-6.5" x2="0" y2="6.5" stroke="#444" stroke-width="0.9"/></g>
<g transform="translate(910.4,203) rotate(-50)"><ellipse cx="0" cy="0" rx="2.6" ry="5.6" fill="none" stroke="#3c3c3c" stroke-width="1.1"/><line x1="0" y1="-6.5" x2="0" y2="6.5" stroke="#444" stroke-width="0.9"/></g>
<g transform="translate(910.4,317.5) rotate(-50)"><ellipse cx="0" cy="0" rx="2.6" ry="5.6" fill="none" stroke="#3c3c3c" stroke-width="1.1"/><line x1="0" y1="-6.5" x2="0" y2="6.5" stroke="#444" stroke-width="0.9"/></g>
<g transform="translate(910.4,464.8) rotate(-50)"><ellipse cx="0" cy="0" rx="2.6" ry="5.6" fill="none" stroke="#3c3c3c" stroke-width="1.1"/><line x1="0" y1="-6.5" x2="0" y2="6.5" stroke="#444" stroke-width="0.9"/></g>
<text transform="translate(888.5,193) rotate(-90)" x="0" y="0" font-size="8.33" textLength="26" lengthAdjust="spacingAndGlyphs" fill="#4a4a4a" font-weight="normal">305mm</text>
<text transform="translate(889.5,278) rotate(-90)" x="0" y="0" font-size="8.33" textLength="34" lengthAdjust="spacingAndGlyphs" fill="#4a4a4a" font-weight="normal">2135mm</text>
<text transform="translate(909.5,278) rotate(-90)" x="0" y="0" font-size="8.33" textLength="34" lengthAdjust="spacingAndGlyphs" fill="#4a4a4a" font-weight="normal">2440mm</text>
<text transform="translate(888,349.9) rotate(-90)" x="0" y="0" font-size="8.33" textLength="28.19999999999999" lengthAdjust="spacingAndGlyphs" fill="#4a4a4a" font-weight="normal">737mm</text>
<text transform="translate(881.7,383) rotate(-90)" x="0" y="0" font-size="8.21" textLength="28" lengthAdjust="spacingAndGlyphs" fill="#4a4a4a" font-weight="normal">610mm</text>
<text transform="translate(888.5,431.7) rotate(-90)" x="0" y="0" font-size="8.33" textLength="33.19999999999999" lengthAdjust="spacingAndGlyphs" fill="#4a4a4a" font-weight="normal">1525mm</text>
<text transform="translate(908.5,404.9) rotate(-90)" x="0" y="0" font-size="8.33" textLength="37.099999999999966" lengthAdjust="spacingAndGlyphs" fill="#4a4a4a" font-weight="normal">3050mm</text>
<text transform="translate(917.5,404.9) rotate(-90)" x="0" y="0" font-size="8.33" textLength="37.89999999999998" lengthAdjust="spacingAndGlyphs" fill="#4a4a4a" font-weight="normal">ADDITION</text>
<text transform="translate(888.5,494.7) rotate(-90)" x="0" y="0" font-size="8.97" textLength="21.899999999999977" lengthAdjust="spacingAndGlyphs" fill="#4a4a4a" font-weight="normal">178mm</text>
<text transform="translate(909.5,684) rotate(-90)" x="0" y="0" font-size="8.33" textLength="36" lengthAdjust="spacingAndGlyphs" fill="#4a4a4a" font-weight="normal">8765mm</text>
</svg>
<svg class="abs" style="left:0;top:0" width="1118" height="80"><path d="M954 38.5 Q956.2 34.8 958.6 38.3 V45.2 Q960.8 42.6 962.8 45.4 Q965 43.8 967 46.3 Q969.8 45.2 971.8 48.3 Q973.1 52 972.7 56.5 Q972.2 62.5 969.6 66.2 L968.2 68.4 H957.6 Q955.2 66 953.2 61.2 L948.6 54.2 Q946.6 51.2 949.2 50.3 Q951.6 49.6 954 52.6 Z" fill="#fdfdfd" stroke="#2c2c2c" stroke-width="1.3" stroke-linejoin="round"/><path d="M958.6 45.2 V50.5 M962.8 45.4 V50.8 M967 46.3 V51" stroke="#2c2c2c" stroke-width="1.1"/></svg>
<div id="rbar"></div><div style="position:absolute;left:1117px;top:0;width:1px;height:776px;background:#9a9a9a"></div>
</body></html>
